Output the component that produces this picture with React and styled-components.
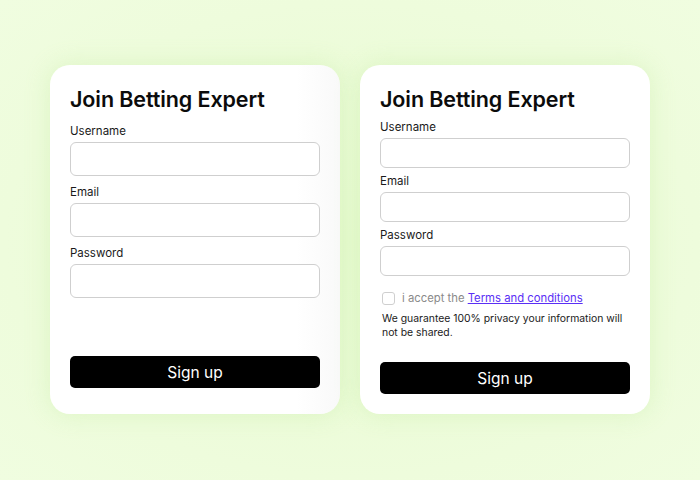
import React from "react";
import styled, { createGlobalStyle } from "styled-components";

const Global = createGlobalStyle`
  html, body { margin: 0; padding: 0; }
  body {
    width: 700px;
    height: 480px;
    background: #ecfcd6;
    font-family: Inter, "Noto Sans", sans-serif;
    color: #111;
  }
  * { box-sizing: border-box; }
`;

const Page = styled.div`
  width: 700px;
  height: 480px;
  display: flex;
  justify-content: center;
  align-items: flex-start;
  gap: 20px;
  padding-top: 65px;
  background: radial-gradient(ellipse at 50% 50%, #e8fbd2 0%, #eefcdc 70%, #f0fde0 100%);
`;

const Card = styled.div`
  width: 290px;
  height: 349px;
  background: ${(p) => (p.$shade ? "linear-gradient(90deg, #ffffff 85%, #f9f9f9 100%)" : "#ffffff")};
  border-radius: 20px;
  padding: 20px;
  display: flex;
  flex-direction: column;
  box-shadow: 0 0 24px rgba(180, 230, 140, 0.3);
`;

const Title = styled.h1`
  margin: 0 0 ${(p) => p.$gap}px 0;
  font-size: 21.5px;
  font-weight: 600;
  line-height: 28px;
  letter-spacing: -0.1px;
  color: #0b0b0b;
`;

const Field = styled.div`
  display: flex;
  flex-direction: column;
  gap: 3px;
  margin-bottom: ${(p) => p.$mb}px;
`;

const Label = styled.label`
  font-size: 11.5px;
  line-height: 16px;
  color: #1a1a1a;
`;

const Input = styled.input`
  width: 100%;
  height: ${(p) => p.$h}px;
  border: 1px solid #cfcfcf;
  border-radius: 6px;
  background: #fff;
  outline: none;
  font: inherit;
`;

const Spacer = styled.div`
  flex: ${(p) => (p.$fixed ? `0 0 ${p.$fixed}px` : "1")};
`;

const Button = styled.button`
  width: 100%;
  height: 32px;
  flex: 0 0 32px;
  background: #000;
  color: #fff;
  border: none;
  border-radius: 5px;
  font-family: inherit;
  font-size: 15.5px;
  font-weight: 400;
  cursor: pointer;
`;

const CheckRow = styled.div`
  display: flex;
  align-items: center;
  gap: 7px;
  height: 16px;
  margin: 0 0 6px 2px;
  font-size: 11.3px;
  color: #8a8a8a;
`;

const Box = styled.span`
  width: 13px;
  height: 13px;
  border: 1px solid #cfcfcf;
  border-radius: 3px;
  background: #fff;
`;

const Link = styled.a`
  color: #5a2ff5;
  text-decoration: underline;
`;

const Note = styled.p`
  margin: 0 0 22px 2px;
  font-size: 10.4px;
  line-height: 14px;
  color: #1a1a1a;
`;

function App() {
  return (
    <>
      <Global />
      <Page>
        <Card $shade>
          <Title $gap={10}>Join Betting Expert</Title>
          <Field $mb={8}>
            <Label>Username</Label>
            <Input $h={34} />
          </Field>
          <Field $mb={8}>
            <Label>Email</Label>
            <Input $h={34} />
          </Field>
          <Field $mb={0}>
            <Label>Password</Label>
            <Input $h={34} />
          </Field>
          <Spacer />
          <Button>Sign up</Button>
          <Spacer $fixed={6} />
        </Card>
        <Card>
          <Title $gap={6}>Join Betting Expert</Title>
          <Field $mb={5}>
            <Label>Username</Label>
            <Input $h={30} />
          </Field>
          <Field $mb={5}>
            <Label>Email</Label>
            <Input $h={30} />
          </Field>
          <Field $mb={14}>
            <Label>Password</Label>
            <Input $h={30} />
          </Field>
          <CheckRow>
            <Box />
            <span>
              i accept the <Link href="#">Terms and conditions</Link>
            </span>
          </CheckRow>
          <Note>We guarantee 100% privacy your information will not be shared.</Note>
          <Button>Sign up</Button>
        </Card>
      </Page>
    </>
  );
}

export default App;
